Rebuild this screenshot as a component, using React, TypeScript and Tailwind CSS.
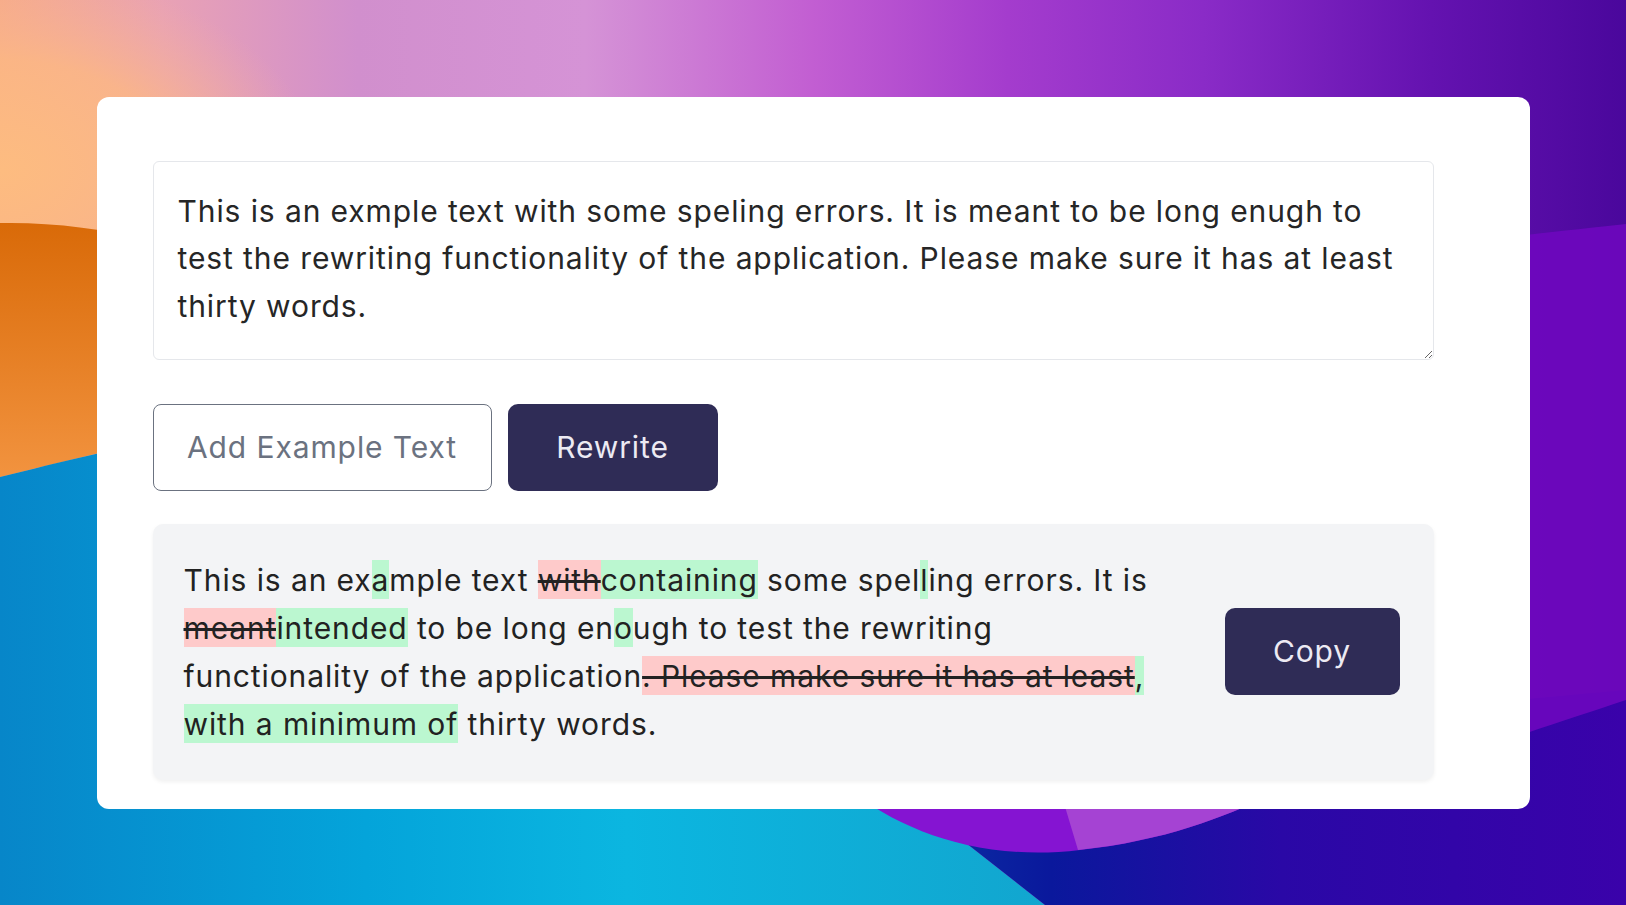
import { useState } from "react";

const SAMPLE =
  "This is an exmple text with some speling errors. It is meant to be long enugh to test the rewriting functionality of the application. Please make sure it has at least thirty words.";

type Part = { text: string; kind?: "add" | "del" };

const DIFF: Part[] = [
  { text: "This is an ex" },
  { text: "a", kind: "add" },
  { text: "mple text " },
  { text: "with", kind: "del" },
  { text: "containing", kind: "add" },
  { text: " some spel" },
  { text: "l", kind: "add" },
  { text: "ing errors. It is " },
  { text: "meant", kind: "del" },
  { text: "intended", kind: "add" },
  { text: " to be long en" },
  { text: "o", kind: "add" },
  { text: "ugh to test the rewriting functionality of the application" },
  { text: ". Please make sure it has at least", kind: "del" },
  { text: ",", kind: "add" },
  { text: " " },
  { text: "with a minimum of", kind: "add" },
  { text: " thirty words." },
];

function Wallpaper() {
  return (
    <svg
      className="[grid-area:1/1] h-full w-full"
      viewBox="0 0 1626 905"
      preserveAspectRatio="none"
      aria-hidden
    >
      <defs>
        <linearGradient id="sky" x1="0" y1="0" x2="1" y2="0">
          <stop offset="0" stopColor="#f7ab86" />
          <stop offset="0.1" stopColor="#e9a2b4" />
          <stop offset="0.22" stopColor="#d18fcd" />
          <stop offset="0.36" stopColor="#d593d6" />
          <stop offset="0.5" stopColor="#c25ed2" />
          <stop offset="0.62" stopColor="#a43ccd" />
          <stop offset="0.74" stopColor="#8a2bc7" />
          <stop offset="0.88" stopColor="#6412b0" />
          <stop offset="1" stopColor="#4a079c" />
        </linearGradient>
        <radialGradient id="peach" cx="0.5" cy="0.5" r="0.5">
          <stop offset="0" stopColor="#fdbc80" />
          <stop offset="0.55" stopColor="#fcb884" stopOpacity="0.8" />
          <stop offset="1" stopColor="#f4b0a0" stopOpacity="0" />
        </radialGradient>
        <linearGradient id="orange" x1="0" y1="0" x2="0" y2="1">
          <stop offset="0" stopColor="#d96a08" />
          <stop offset="1" stopColor="#f2933f" />
        </linearGradient>
        <linearGradient id="sea" x1="0" y1="0" x2="1" y2="0">
          <stop offset="0" stopColor="#0786c9" />
          <stop offset="0.35" stopColor="#04a4da" />
          <stop offset="0.6" stopColor="#0bb6e0" />
          <stop offset="1" stopColor="#12a6cf" />
        </linearGradient>
        <linearGradient id="deep" x1="0" y1="0" x2="1" y2="0">
          <stop offset="0" stopColor="#0a3aa8" />
          <stop offset="0.25" stopColor="#0a189c" />
          <stop offset="0.55" stopColor="#2a08a6" />
          <stop offset="1" stopColor="#3a02aa" />
        </linearGradient>
      </defs>
      <rect x="0" y="0" width="1626" height="905" fill="url(#sky)" />
      <ellipse cx="0" cy="170" rx="320" ry="200" fill="url(#peach)" />
      <path d="M0,223 C50,222 100,228 160,242 L160,440 C100,452 50,465 0,477 Z" fill="url(#orange)" />
      <path d="M0,477 C60,462 120,448 200,430 L860,760 L1045,905 L0,905 Z" fill="url(#sea)" />
      <path d="M860,760 L1626,690 L1626,905 L1045,905 Z" fill="url(#deep)" />
      <path d="M1500,238 C1550,232 1590,228 1626,224 L1626,700 C1590,712 1550,725 1500,742 Z" fill="#7007c0" opacity="0.85" />
      <path d="M850,790 C900,830 980,862 1080,850 C1170,840 1230,815 1280,790 Z" fill="#8514d2" />
      <path d="M1060,790 L1078,850 C1170,840 1230,815 1280,790 Z" fill="#a543d3" />
    </svg>
  );
}

export default function App() {
  const [text, setText] = useState(SAMPLE);

  return (
    <div className="grid h-screen w-full overflow-hidden font-['Inter',sans-serif]">
      <Wallpaper />
      <div className="[grid-area:1/1] flex items-center justify-center">
        <div className="h-[712px] w-[1433px] rounded-[12px] bg-white pl-[56px] pt-[64px]">
          <div className="flex w-[1281px] flex-col">
            <textarea
              value={text}
              onChange={(e) => setText(e.target.value)}
              className="block h-[199px] w-full rounded-[6px] border border-[#e5e7eb] bg-white pb-[24px] pl-[24px] pr-[18px] pt-[26px] text-[30px] leading-[47.7px] tracking-[0.9px] text-[#262626] outline-none"
            />

            <div className="mt-[44px] flex gap-[16px]">
              <button
                onClick={() => setText(SAMPLE)}
                className="h-[87px] w-[339px] rounded-[8px] border-[1.5px] border-[#6b7280] bg-white text-[30px] tracking-[0.9px] text-[#6b7280]"
              >
                Add Example Text
              </button>
              <button className="h-[87px] w-[210px] rounded-[10px] bg-[#2f2c56] text-[30px] tracking-[0.9px] text-[#eceaf3]">
                Rewrite
              </button>
            </div>

            <div className="mt-[33px] flex h-[256px] items-center justify-between rounded-[10px] bg-[#f3f4f6] pl-[31px] pr-[34px] shadow-[0_2px_4px_rgba(0,0,0,0.06)]">
              <p className="w-[992px] text-[30px] leading-[48px] tracking-[0.9px] text-[#222222]">
                {DIFF.map((part, i) =>
                  part.kind === "add" ? (
                    <span key={i} className="bg-[#bbf7d0] pb-[1px] pt-[2px]">
                      {part.text}
                    </span>
                  ) : part.kind === "del" ? (
                    <span key={i} className="bg-[#fecaca] pb-[1px] pt-[2px] line-through">
                      {part.text}
                    </span>
                  ) : (
                    <span key={i}>{part.text}</span>
                  )
                )}
              </p>
              <button className="h-[87px] w-[175px] shrink-0 rounded-[10px] bg-[#2f2c56] text-[30px] tracking-[0.9px] text-[#eceaf3]">
                Copy
              </button>
            </div>
          </div>
        </div>
      </div>
    </div>
  );
}
